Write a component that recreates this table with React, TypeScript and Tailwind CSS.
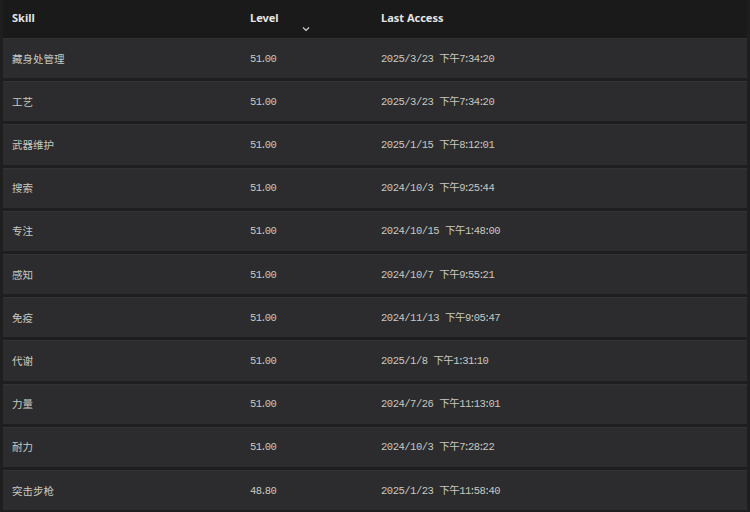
import React from "react";

const rows = [
  { skill: "藏身处管理", level: "51.00", last: "2025/3/23 下午7:34:20" },
  { skill: "工艺", level: "51.00", last: "2025/3/23 下午7:34:20" },
  { skill: "武器维护", level: "51.00", last: "2025/1/15 下午8:12:01" },
  { skill: "搜索", level: "51.00", last: "2024/10/3 下午9:25:44" },
  { skill: "专注", level: "51.00", last: "2024/10/15 下午1:48:00" },
  { skill: "感知", level: "51.00", last: "2024/10/7 下午9:55:21" },
  { skill: "免疫", level: "51.00", last: "2024/11/13 下午9:05:47" },
  { skill: "代谢", level: "51.00", last: "2025/1/8 下午1:31:10" },
  { skill: "力量", level: "51.00", last: "2024/7/26 下午11:13:01" },
  { skill: "耐力", level: "51.00", last: "2024/10/3 下午7:28:22" },
  { skill: "突击步枪", level: "48.80", last: "2025/1/23 下午11:58:40" },
];

const cjk = "font-['Noto_Sans',_'Noto_Sans_CJK_SC',_sans-serif]";
const mono = "font-['Liberation_Mono',_'Noto_Sans_CJK_SC',_monospace]";

// digits stay monospaced, separators get a narrow slot like the original font
const Num: React.FC<{ text: string }> = ({ text }) => (
  <>
    {text.split("").map((c, i) =>
      c === ":" || c === "." ? (
        <span key={i} className="inline-flex w-[3px] justify-center overflow-hidden">
          {c}
        </span>
      ) : (
        <span key={i}>{c}</span>
      )
    )}
  </>
);

const App: React.FC = () => {
  return (
    <div className="w-[750px] h-[512px] overflow-hidden bg-[#1e1e1f] px-[3px]">
      {/* Header */}
      <div className={`flex h-[38px] bg-[#1a1a1a] text-[11px] font-bold text-[#e4e4e4] ${cjk}`}>
        <div className="w-[247px] pl-[9px] pt-[10px]">Skill</div>
        <div className="w-[131px] pt-[10px] relative">
          Level
          <svg
            className="absolute left-[52px] top-[26px]"
            width="8"
            height="6"
            viewBox="0 0 8 6"
            fill="none"
            stroke="#d0d0d0"
            strokeWidth="1.2"
          >
            <path d="M1 1.5 L4 4.5 L7 1.5" />
          </svg>
        </div>
        <div className="flex-1 pt-[10px]">Last Access</div>
      </div>

      {/* Rows */}
      {rows.map((r, i) => (
        <div
          key={i}
          className="flex items-center pt-[2px] h-[43.2px] bg-[#2c2c2e] border-t border-t-[#323234] border-b-[3px] border-b-[#1e1e1f] text-[10.5px] text-[#c9c9c0]"
        >
          <div className={`w-[247px] pl-[9px] ${cjk}`}>{r.skill}</div>
          <div className={`w-[131px] tracking-[-0.5px] ${mono}`}>
            <Num text={r.level} />
          </div>
          <div className={`flex-1 tracking-[-0.5px] ${mono}`}>
            <Num text={r.last} />
          </div>
        </div>
      ))}
    </div>
  );
};

export default App;
